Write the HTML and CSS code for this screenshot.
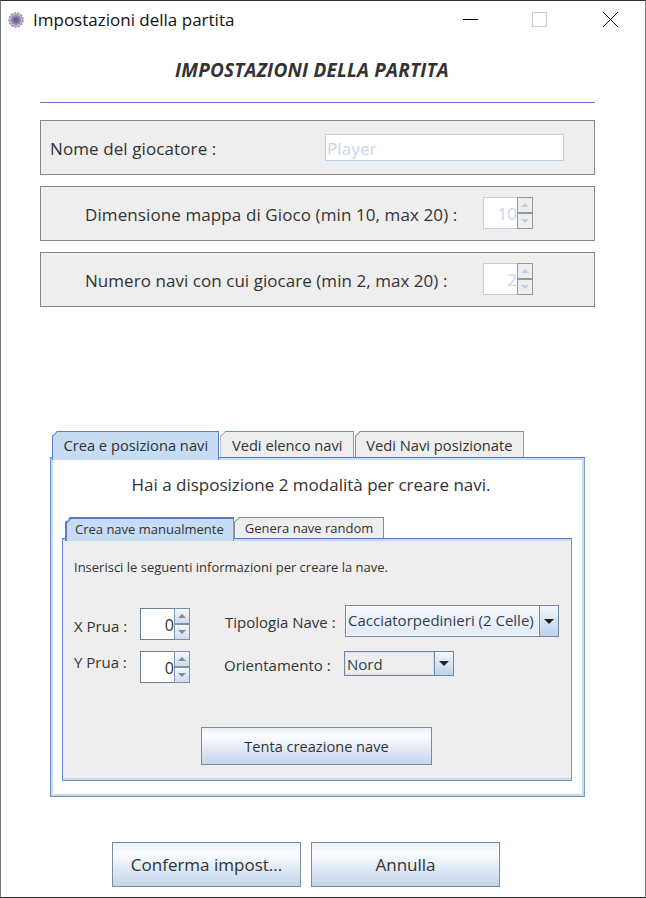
FILE: index.html
```html
<!DOCTYPE html>
<html lang="it">
<head>
    <meta charset="UTF-8">
    <meta name="viewport" content="width=device-width, initial-scale=1.0">
    <title>Impostazioni della partita</title>
    <link rel="stylesheet" href="styles.css">
</head>
<body>
<div class="window">
    <!-- Title bar -->
    <div class="titlebar">
        <svg class="app-icon" width="16" height="16" viewBox="0 0 16 16">
            <circle cx="8" cy="8" r="7" fill="#c3b3d6" stroke="#a890c2" stroke-width="1.6" stroke-dasharray="2.2 1.2"/>
            <circle cx="8" cy="8" r="5" fill="#9583ad"/>
            <circle cx="8" cy="8" r="2.8" fill="#6e6290"/>
        </svg>
        <span class="window-title">Impostazioni della partita</span>
        <div class="window-controls">
            <svg width="15" height="15" viewBox="0 0 15 15"><path d="M0 7.5H15" stroke="#000" fill="none"/></svg>
            <svg width="15" height="15" viewBox="0 0 15 15"><rect x="0.5" y="0.5" width="14" height="14" stroke="#ccc" fill="none"/></svg>
            <svg width="15" height="15" viewBox="0 0 15 15"><path d="M0 0L15 15M15 0L0 15" stroke="#000" fill="none"/></svg>
        </div>
    </div>

    <div class="content">
        <h1 class="page-heading">IMPOSTAZIONI DELLA PARTITA</h1>
        <div class="heading-rule"></div>

        <div class="settings">
            <div class="setting setting-name">
                <label>Nome del giocatore :</label>
                <div class="text-input">Player</div>
            </div>
            <div class="setting setting-spin">
                <label>Dimensione mappa di Gioco (min 10, max 20) :</label>
                <div class="spinner spinner-disabled">
                    <div class="spinner-value">10</div>
                    <div class="spinner-buttons">
                        <span class="spin-btn"><i class="arrow-up"></i></span>
                        <span class="spin-btn"><i class="arrow-down"></i></span>
                    </div>
                </div>
            </div>
            <div class="setting setting-spin setting-ships">
                <label>Numero navi con cui giocare (min 2, max 20) :</label>
                <div class="spinner spinner-disabled">
                    <div class="spinner-value">2</div>
                    <div class="spinner-buttons">
                        <span class="spin-btn"><i class="arrow-up"></i></span>
                        <span class="spin-btn"><i class="arrow-down"></i></span>
                    </div>
                </div>
            </div>
        </div>

        <!-- Outer tabs -->
        <div class="tabs outer-tabs">
            <div class="tab active">Crea e posiziona navi</div>
            <div class="tab">Vedi elenco navi</div>
            <div class="tab">Vedi Navi posizionate</div>
        </div>
        <div class="tab-pane outer-pane">
            <p class="pane-intro">Hai a disposizione 2 modalità per creare navi.</p>

            <!-- Inner tabs -->
            <div class="tabs inner-tabs">
                <div class="tab active">Crea nave manualmente</div>
                <div class="tab">Genera nave random</div>
            </div>
            <div class="tab-pane inner-pane">
                <p class="form-hint">Inserisci le seguenti informazioni per creare la nave.</p>

                <div class="ship-form">
                    <div class="coords">
                        <div class="coord-row">
                            <label>X Prua :</label>
                            <div class="spinner">
                                <div class="spinner-value">0</div>
                                <div class="spinner-buttons">
                                    <span class="spin-btn"><i class="arrow-up"></i></span>
                                    <span class="spin-btn"><i class="arrow-down"></i></span>
                                </div>
                            </div>
                        </div>
                        <div class="coord-row coord-row-y">
                            <label>Y Prua :</label>
                            <div class="spinner">
                                <div class="spinner-value">0</div>
                                <div class="spinner-buttons">
                                    <span class="spin-btn"><i class="arrow-up"></i></span>
                                    <span class="spin-btn"><i class="arrow-down"></i></span>
                                </div>
                            </div>
                        </div>
                    </div>
                    <div class="ship-options">
                        <div class="option-row">
                            <label>Tipologia Nave :</label>
                            <div class="combo combo-type">
                                <span class="combo-value">Cacciatorpedinieri (2 Celle)</span>
                                <span class="combo-btn"><i class="arrow-combo"></i></span>
                            </div>
                        </div>
                        <div class="option-row option-row-dir">
                            <label>Orientamento :</label>
                            <div class="combo combo-dir">
                                <span class="combo-value">Nord</span>
                                <span class="combo-btn"><i class="arrow-combo"></i></span>
                            </div>
                        </div>
                    </div>
                </div>

                <div class="create-row">
                    <button class="btn btn-create" type="button">Tenta creazione nave</button>
                </div>
            </div>
        </div>

        <div class="actions">
            <button class="btn btn-main" type="button">Conferma impost...</button>
            <button class="btn btn-main" type="button">Annulla</button>
        </div>
    </div>
</div>
</body>
</html>
```

FILE: styles.css
```css
* {
    box-sizing: border-box;
}
body {
    margin: 0;
    background: #fff;
    font-family: "Open Sans", "Noto Sans", sans-serif;
    color: #333;
}
label {
    white-space: nowrap;
}
.window {
    width: 646px;
    height: 898px;
    border: 1px solid #777;
    border-top-color: #2f2f2f;
    border-bottom-color: #2f2f2f;
    background: #fff;
    overflow: hidden;
}

/* Title bar */
.titlebar {
    display: flex;
    align-items: center;
    height: 37px;
    padding-left: 7px;
}
.app-icon {
    margin-right: 9px;
}
.window-title {
    font-size: 17px;
    color: #111;
}
.window-controls {
    display: flex;
    gap: 54px;
    margin-left: auto;
    margin-right: 27px;
}
.window-controls svg:last-child {
    margin-left: 2px;
}

/* Heading */
.content {
    padding: 0 50px 0 39px;
}
.page-heading {
    margin: 20px 0 0;
    padding-right: 11px;
    height: 24px;
    line-height: 24px;
    font-size: 19px;
    letter-spacing: 0.2px;
    font-style: italic;
    font-weight: 700;
    text-align: center;
}
.heading-rule {
    height: 1px;
    margin-top: 20px;
    background: #5b7cc4;
}

/* Top settings */
.settings {
    display: flex;
    flex-direction: column;
    gap: 11px;
    margin-top: 17px;
}
.setting {
    display: flex;
    align-items: center;
    height: 55px;
    border: 1px solid #888;
    background: #eee;
    font-size: 17px;
    letter-spacing: 0.1px;
}
.setting label {
    padding-top: 2px;
}
.setting-name {
    padding-left: 9px;
}
.setting-name label {
    width: 275px;
}
.text-input {
    width: 239px;
    height: 27px;
    padding-left: 1px;
    border: 1px solid #b8d0e8;
    background: #fff;
    color: #c4d7ee;
    line-height: 27px;
}
.setting-spin {
    justify-content: space-between;
    padding-left: 44px;
    padding-right: 61px;
}
.setting-ships label {
    letter-spacing: 0.05px;
}
.setting-spin .spinner {
    margin-top: -1px;
}

/* Spinner */
.spinner {
    display: flex;
    width: 50px;
    height: 32px;
}
.spinner-value {
    flex: 1;
    border: 1px solid #6b7f94;
    border-right: 0;
    background: #fff;
    text-align: right;
    font-size: 17px;
    letter-spacing: 0;
    line-height: 32px;
}
.spinner-buttons {
    display: flex;
    flex-direction: column;
    width: 16px;
}
.spin-btn {
    display: flex;
    flex: 1;
    align-items: center;
    justify-content: center;
    border: 1px solid #7e93ab;
    background: linear-gradient(#f4f7fb, #ccdbeb);
}
.arrow-up,
.arrow-down {
    width: 0;
    height: 0;
    border-left: 4px solid transparent;
    border-right: 4px solid transparent;
}
.arrow-up {
    border-bottom: 4px solid #7c8a99;
}
.arrow-down {
    border-top: 4px solid #7c8a99;
}
.spinner-disabled .spinner-value {
    border-color: #b8d0e8;
    color: #c4d7ee;
}
.spinner-disabled .spin-btn {
    border-color: #999;
    background: #eee;
}
.spinner-disabled .arrow-up {
    border-bottom-color: #bcd2ea;
}
.spinner-disabled .arrow-down {
    border-top-color: #bcd2ea;
}

/* Tabs */
.tabs {
    display: flex;
    align-items: flex-start;
}
.tab {
    position: relative;
    border: 1px solid #7e8fa3;
    border-bottom: 0;
    background: #eee;
    text-align: center;
    white-space: nowrap;
    clip-path: polygon(5px 0, 100% 0, 100% 100%, 0 100%, 0 5px);
}
/* the cut corner of a tab */
.tab::before {
    content: "";
    position: absolute;
    left: -1px;
    top: 4px;
    width: 8px;
    height: 1px;
    background: #7e8fa3;
    transform: rotate(-45deg);
    transform-origin: 0 0;
}
.tab.active {
    z-index: 1;
    border-color: #5b7cc4;
    background: #c6dcf2;
}
.tab.active::before {
    background: #5b7cc4;
}
.outer-tabs {
    margin-top: 124px;
    margin-left: 12px;
    gap: 1px;
    height: 26px;
    font-size: 14.7px;
}
.outer-tabs .tab {
    height: 26px;
    line-height: 26px;
    padding: 0 10.4px;
}
.outer-tabs .tab.active {
    height: 29px;
}
.tab-pane {
    border: 1px solid #7e8fa3;
}
.outer-pane {
    width: 535px;
    height: 340px;
    margin-left: 10px;
    padding: 0 12px 0 11px;
    border-color: #5b7cc4 #7e9cc8 #7e8fa3 #6a8dcc;
    background: #fff;
    box-shadow: inset 0 0 0 2px #c6dcf2;
}
.pane-intro {
    margin: 0;
    padding: 15px 12px 0 0;
    height: 59px;
    text-align: center;
    font-size: 17px;
    line-height: 24px;
}
.inner-tabs {
    margin-left: 3px;
    height: 21px;
    font-size: 13px;
}
.inner-tabs .tab {
    height: 21px;
    line-height: 21px;
    padding: 0 10px;
}
.inner-tabs .tab.active {
    height: 24px;
    padding: 0 9px 0 8px;
    border-width: 2px 1px 0 2px;
}
.inner-pane {
    height: 243px;
    padding: 0 11px;
    border-color: #5b7cc4 #7e93ab #7e8fa3 #6a8dcc;
    background: #eee;
    box-shadow: inset 0 2px #c6dcf2, inset 0 -2px #c6dcf2;
}
.form-hint {
    margin: 0;
    padding-top: 19px;
    height: 69px;
    font-size: 13px;
    line-height: 18px;
}

/* Ship form */
.ship-form {
    display: flex;
    font-size: 15px;
}
.coords {
    width: 151px;
}
.coord-row {
    display: flex;
    align-items: flex-start;
    gap: 13px;
    line-height: 20px;
}
.coord-row label {
    width: 53px;
    margin-top: 8px;
}
.coord-row-y {
    margin-top: 11px;
}
.coord-row-y label {
    margin-top: 1px;
}
.coord-row .spinner-value {
    line-height: 33px;
    font-size: 16px;
}
.ship-options {
    margin-top: -3px;
}
.option-row {
    display: flex;
    align-items: center;
    height: 32px;
}
.option-row label {
    width: 120px;
    padding-top: 1px;
}
.option-row-dir {
    margin-top: 14px;
    margin-left: -1px;
    height: 25px;
}
.option-row-dir label {
    padding-top: 2px;
}
.combo {
    display: flex;
    height: 100%;
    border: 1px solid #6f88a6;
    background: #eee;
}
.combo-type {
    width: 214px;
}
.combo-dir {
    width: 110px;
}
.combo-value {
    flex: 1;
    padding-left: 1px;
    border: 1px solid #fff;
    background: linear-gradient(#f4f7fb, #e2ebf5);
    white-space: nowrap;
    line-height: 27px;
    color: #2e3f55;
}
.combo-dir .combo-value {
    border-color: #ddd;
    background: #eee;
    line-height: 22px;
}
.combo-btn {
    display: flex;
    align-items: center;
    justify-content: center;
    width: 19px;
    border-left: 1px solid #6f88a6;
    background: linear-gradient(#f4f7fb, #bdd2e8);
}
.arrow-combo {
    width: 0;
    height: 0;
    border-left: 5px solid transparent;
    border-right: 5px solid transparent;
    border-top: 5px solid #222;
}

/* Buttons */
.btn {
    border: 1px solid #7b8ca1;
    background: linear-gradient(#e8f0f8, #fbfdff 22%, #c3d5e9);
    color: #333;
    font-family: inherit;
    padding: 0;
}
.create-row {
    display: flex;
    justify-content: center;
    margin-top: 44px;
    margin-left: -1px;
}
.btn-create {
    width: 231px;
    height: 38px;
    font-size: 14.6px;
}
.actions {
    display: flex;
    gap: 10px;
    margin-top: 45px;
    margin-left: 72px;
}
.btn-main {
    width: 189px;
    height: 45px;
    font-size: 17px;
}
```
